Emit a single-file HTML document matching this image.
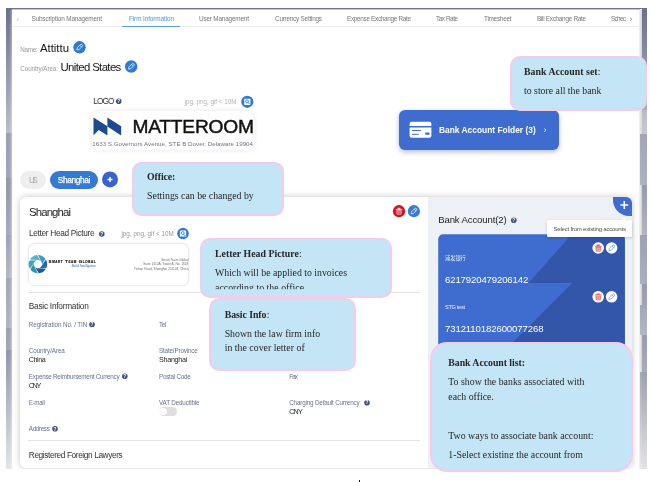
<!DOCTYPE html>
<html lang="en"><head><meta charset="utf-8"><title>Firm Information</title>
<style>
html,body{margin:0;padding:0;background:#fff;}
body{width:650px;height:482px;position:relative;overflow:hidden;font-family:"Liberation Sans", "Noto Sans CJK SC", sans-serif;}
.t{position:absolute;white-space:nowrap;line-height:1;}
.s{font-family:"Liberation Serif", "Noto Serif CJK SC", serif;}
.c{position:absolute;box-sizing:border-box;background:#c3e5f6;border:2px solid #f6cbe9;overflow:hidden;}
svg{position:absolute;overflow:visible;}
#pg{position:absolute;left:0;top:0;width:650px;height:482px;overflow:hidden;filter:blur(0.35px);}
</style></head><body><div id="pg">
<div style="position:absolute;left:6px;top:8px;width:641px;height:1px;background:#6f7592;"></div>
<div style="position:absolute;left:12px;top:9px;width:628px;height:1px;background:#c4c7d3;"></div>
<div style="position:absolute;left:6px;top:8px;width:6px;height:125px;background:linear-gradient(to bottom,#6a708f,#b9bdcb);"></div>
<div style="position:absolute;left:6px;top:133px;width:6px;height:45px;background:linear-gradient(to bottom,#999eb4,#a2a6ba);"></div>
<div style="position:absolute;left:6px;top:178px;width:6px;height:57px;background:linear-gradient(to bottom,#9397af,#a7abbe);"></div>
<div style="position:absolute;left:6px;top:235px;width:6px;height:43px;background:linear-gradient(to bottom,#9ea2b7,#b5b8c7);"></div>
<div style="position:absolute;left:6px;top:278px;width:6px;height:50px;background:linear-gradient(to bottom,#a2a6b9,#b1b5c4);"></div>
<div style="position:absolute;left:6px;top:328px;width:6px;height:22px;background:linear-gradient(to bottom,#9ca0b4,#a4a8ba);"></div>
<div style="position:absolute;left:6px;top:350px;width:6px;height:118.5px;background:linear-gradient(to bottom,#9095aa,#e3e5ea);"></div>
<div style="position:absolute;left:6px;top:9.6px;width:6px;height:459px;background:linear-gradient(to right,rgba(255,255,255,0) 55%,rgba(255,255,255,.35));"></div>
<div style="position:absolute;left:641.6px;top:8px;width:5.4px;height:102px;background:linear-gradient(to bottom,#6a708f,#a9adbd);"></div>
<div style="position:absolute;left:641.6px;top:110px;width:5.4px;height:24px;background:linear-gradient(to bottom,#b9bcc8,#c6c8d1);"></div>
<div style="position:absolute;left:641.6px;top:134px;width:5.4px;height:51px;background:linear-gradient(to bottom,#a1a5b6,#adb0bf);"></div>
<div style="position:absolute;left:641.6px;top:185px;width:5.4px;height:50px;background:linear-gradient(to bottom,#959aae,#b2b5c3);"></div>
<div style="position:absolute;left:641.6px;top:235px;width:5.4px;height:49px;background:linear-gradient(to bottom,#9da1b4,#abaebd);"></div>
<div style="position:absolute;left:641.6px;top:284px;width:5.4px;height:51px;background:linear-gradient(to bottom,#959aad,#b4b7c4);"></div>
<div style="position:absolute;left:641.6px;top:335px;width:5.4px;height:37px;background:linear-gradient(to bottom,#969bae,#a9acbc);"></div>
<div style="position:absolute;left:641.6px;top:372px;width:5.4px;height:96.5px;background:linear-gradient(to bottom,#9da0b0,#e3e3e6);"></div>
<div style="position:absolute;left:639.4px;top:9.6px;width:2.2px;height:459px;background:linear-gradient(to right,#f4f4f6,#d2d3d9);"></div>
<div style="position:absolute;left:639.6px;top:134px;width:2px;height:51px;background:linear-gradient(to bottom,#a3a7b8,#aeb2c1);"></div>
<div style="position:absolute;left:639.6px;top:235px;width:2px;height:49px;background:linear-gradient(to bottom,#a0a4b6,#acafbf);"></div>
<div style="position:absolute;left:639.6px;top:305px;width:2px;height:30px;background:linear-gradient(to bottom,#a2a6b7,#b3b6c4);"></div>
<div style="position:absolute;left:639.6px;top:372px;width:2px;height:96.5px;background:linear-gradient(to bottom,#a6a9b7,#e6e7ea);"></div>
<div style="position:absolute;left:12px;top:26.4px;width:627.4px;height:0.9px;background:#ededf0;"></div>
<div style="position:absolute;left:122px;top:26px;width:58px;height:1.4px;background:#5a9ee0;"></div>
<span class="t" id="t0" style="top:16.23px;font-size:8px;color:#c4c4c4;left:16.50px;">‹</span>
<span class="t" id="t1" style="top:15.78px;font-size:6.4px;color:#787878;letter-spacing:-0.170px;left:31.50px;">Subscription Management</span>
<span class="t" id="t2" style="top:15.78px;font-size:6.4px;color:#4b96e0;letter-spacing:-0.102px;left:129.00px;">Firm Information</span>
<span class="t" id="t3" style="top:15.78px;font-size:6.4px;color:#787878;letter-spacing:-0.184px;left:199.00px;">User Management</span>
<span class="t" id="t4" style="top:15.78px;font-size:6.4px;color:#787878;letter-spacing:-0.237px;left:275.00px;">Currency Settings</span>
<span class="t" id="t5" style="top:15.78px;font-size:6.4px;color:#787878;letter-spacing:-0.318px;left:347.00px;">Expense Exchange Rate</span>
<span class="t" id="t6" style="top:15.78px;font-size:6.4px;color:#787878;letter-spacing:-0.460px;left:436.00px;">Tax Rate</span>
<span class="t" id="t7" style="top:15.78px;font-size:6.4px;color:#787878;letter-spacing:-0.264px;left:484.00px;">Timesheet</span>
<span class="t" id="t8" style="top:15.78px;font-size:6.4px;color:#787878;letter-spacing:-0.294px;left:537.00px;">Bill Exchange Rate</span>
<span class="t" id="t9" style="top:15.78px;font-size:6.4px;color:#787878;letter-spacing:-0.691px;left:611.00px;">Schec</span>
<span class="t" id="t10" style="top:14.26px;font-size:9.5px;color:#8a8a8a;left:629.30px;">›</span>
<span class="t" id="t11" style="top:46.57px;font-size:6.3px;color:#9a9a9a;letter-spacing:-0.312px;left:20.30px;">Name:</span>
<span class="t" id="t12" style="top:42.55px;font-size:11.4px;color:#141414;letter-spacing:-0.021px;left:40.00px;">Attittu</span>
<svg style="left:0;top:0" width="650" height="482" viewBox="0 0 650 482"><g transform="translate(79.5 47.3)"><circle r="6.2" fill="#2f7ad4"/><g transform="scale(1.0)"><g transform="rotate(-45)" fill="none" stroke="#fff" stroke-width="0.75" stroke-linejoin="round" opacity="0.92"><path d="M-2.1 -1.25 H2.4 a1.25 1.25 0 0 1 0 2.5 H-2.1 L-3.7 0 Z"/><path d="M1.7 -1.25 V1.25"/></g></g></g></svg>
<span class="t" id="t13" style="top:66.07px;font-size:6.3px;color:#9a9a9a;letter-spacing:-0.097px;left:20.30px;">Country/Area:</span>
<span class="t" id="t14" style="top:61.75px;font-size:11.4px;color:#141414;letter-spacing:-0.633px;left:60.50px;">United States</span>
<svg style="left:0;top:0" width="650" height="482" viewBox="0 0 650 482"><g transform="translate(131.2 66.5)"><circle r="6.2" fill="#2f7ad4"/><g transform="scale(1.0)"><g transform="rotate(-45)" fill="none" stroke="#fff" stroke-width="0.75" stroke-linejoin="round" opacity="0.92"><path d="M-2.1 -1.25 H2.4 a1.25 1.25 0 0 1 0 2.5 H-2.1 L-3.7 0 Z"/><path d="M1.7 -1.25 V1.25"/></g></g></g></svg>
<span class="t" id="t15" style="top:96.97px;font-size:8.3px;color:#333;letter-spacing:-0.895px;left:93.20px;">LOGO</span>
<svg style="left:0;top:0" width="650" height="482" viewBox="0 0 650 482"><g transform="translate(118.7 101.2)"><circle r="2.8" fill="#42527a"/><text x="0" y="1.74" text-anchor="middle" font-family="Liberation Sans, sans-serif" font-weight="700" font-size="4.76" fill="#fff">?</text></g></svg>
<span class="t" id="t16" style="top:99.27px;font-size:6.3px;color:#b3b3b3;letter-spacing:-0.016px;left:184.70px;">jpg, png, gif &lt; 10M</span>
<svg style="left:0;top:0" width="650" height="482" viewBox="0 0 650 482"><g transform="translate(247.3 101.8)"><circle r="6.1" fill="#2f7ad4"/><rect x="-3.1" y="-3" width="6.2" height="6.1" rx="0.6" fill="#fff"/><circle cx="-0.3" cy="-0.4" r="1.5" fill="none" stroke="#2f7ad4" stroke-width="0.9"/><path d="M0.8 0.8 L2.2 2.2" stroke="#2f7ad4" stroke-width="0.9" stroke-linecap="round"/></g></svg>
<div style="position:absolute;left:91.7px;top:111px;width:162.3px;height:39px;background:#fff;border-radius:7px;box-shadow:0 0 5px rgba(0,0,0,.10);"></div>
<svg style="left:0;top:0" width="650" height="482" viewBox="0 0 650 482"><path d="M93.5 117.4 L107.4 126.3 L107.4 117.4 L121.2 126.3 L121.2 135.5 L107.4 126.6 L107.4 135.5 L98.8 129.9 L93.5 135.3 Z" fill="#1d4b8b"/></svg>
<span class="t" id="t17" style="top:117.05px;font-size:19.2px;color:#111;letter-spacing:-0.212px;left:132.40px;-webkit-text-stroke:0.45px #111;">MATTEROOM</span>
<span class="t" id="t18" style="top:141.25px;font-size:6.2px;color:#6f7683;letter-spacing:0.010px;left:92.30px;">1633 S.Governors Avenue, STE B Dover, Delaware 19904</span>
<div style="position:absolute;left:398.5px;top:110.4px;width:160px;height:39.4px;background:#3e6ccf;border-radius:6px;box-shadow:0 2px 5px rgba(40,60,120,.35);"></div>
<svg style="left:0;top:0" width="650" height="482" viewBox="0 0 650 482"><path d="M411.6 121.8 h17.8 a2 2 0 0 1 2 2 v2.2 h-21.8 v-2.2 a2 2 0 0 1 2 -2 z" fill="#fff"/><path d="M409.6 127.4 h21.8 v8.4 a2 2 0 0 1 -2 2 h-17.8 a2 2 0 0 1 -2 -2 z" fill="#fff"/><rect x="411.9" y="130" width="9" height="1" fill="#3e6ccf"/><rect x="411.9" y="133.8" width="6.9" height="1" fill="#3e6ccf"/><rect x="425.2" y="132.4" width="4.3" height="2.4" rx="0.5" fill="#3e6ccf"/></svg>
<span class="t" id="t19" style="top:125.89px;font-size:8.4px;color:#fff;font-weight:700;letter-spacing:0.010px;left:439.00px;">Bank Account Folder (3)</span>
<span class="t" id="t20" style="top:126.18px;font-size:9px;color:#e8eefc;left:543.50px;">›</span>
<div style="position:absolute;left:20.3px;top:171px;width:25.7px;height:17.8px;background:#eeeeee;border-radius:9px;"></div>
<span class="t" id="t21" style="top:175.97px;font-size:8.3px;color:#a8a8a8;letter-spacing:-2.731px;left:29.00px;">US</span>
<div style="position:absolute;left:49.9px;top:171px;width:48.3px;height:17.8px;background:#3479d2;border-radius:9px;"></div>
<span class="t" id="t22" style="top:175.97px;font-size:8.3px;color:#fff;letter-spacing:-0.354px;left:57.80px;-webkit-text-stroke:0.25px #fff;">Shanghai</span>
<svg style="left:0;top:0" width="650" height="482" viewBox="0 0 650 482"><g transform="translate(110 179.4)"><circle r="8" fill="#3862cf"/><path d="M-2.5 0 H2.5 M0 -2.5 V2.5" stroke="#fff" stroke-width="1.5"/></g></svg>
<div style="position:absolute;left:20.3px;top:197.4px;width:611.7px;height:270.9px;background:#fff;border-radius:6px;box-shadow:0 0 6px rgba(0,0,0,.24);clip-path:inset(-8px -8px -0.7px -8px);"></div>
<div style="position:absolute;left:428.4px;top:197.4px;width:203.6px;height:270.9px;background:#edf0f5;border-radius:0 6px 6px 0;"></div>
<span class="t" id="t23" style="top:206.85px;font-size:11.4px;color:#222;letter-spacing:-0.877px;left:29.00px;">Shanghai</span>
<svg style="left:0;top:0" width="650" height="482" viewBox="0 0 650 482"><g transform="translate(399 211.2)"><circle r="6.1" fill="#d0121b"/><path d="M-3.4 -2.3 H3.4 V-1.2 H-3.4 Z M-1.5 -3.4 H1.5 V-2.3 H-1.5 Z M-2.7 -0.9 H2.7 L2.4 3.4 H-2.4 Z" fill="#f6c9cb"/><path d="M-1.9 0.1 H1.9 M-1.9 1.2 H1.9 M-1.9 2.3 H1.9" stroke="#d0121b" stroke-width="0.55"/></g></svg>
<svg style="left:0;top:0" width="650" height="482" viewBox="0 0 650 482"><g transform="translate(413.9 211.2)"><circle r="6.1" fill="#3a7bd5"/><g transform="scale(1.0)"><g transform="rotate(-45)" fill="none" stroke="#fff" stroke-width="0.75" stroke-linejoin="round" opacity="0.92"><path d="M-2.1 -1.25 H2.4 a1.25 1.25 0 0 1 0 2.5 H-2.1 L-3.7 0 Z"/><path d="M1.7 -1.25 V1.25"/></g></g></g></svg>
<span class="t" id="t24" style="top:229.27px;font-size:8.3px;color:#333;letter-spacing:-0.327px;left:29.00px;">Letter Head Picture</span>
<svg style="left:0;top:0" width="650" height="482" viewBox="0 0 650 482"><g transform="translate(101.8 234)"><circle r="2.8" fill="#42527a"/><text x="0" y="1.74" text-anchor="middle" font-family="Liberation Sans, sans-serif" font-weight="700" font-size="4.76" fill="#fff">?</text></g></svg>
<span class="t" id="t25" style="top:231.37px;font-size:6.3px;color:#9a9a9a;letter-spacing:0.018px;left:121.40px;">jpg, png, gif &lt; 10M</span>
<svg style="left:0;top:0" width="650" height="482" viewBox="0 0 650 482"><g transform="translate(183 233.5)"><circle r="5.8" fill="#2f7ad4"/><rect x="-3.1" y="-3" width="6.2" height="6.1" rx="0.6" fill="#fff"/><circle cx="-0.3" cy="-0.4" r="1.5" fill="none" stroke="#2f7ad4" stroke-width="0.9"/><path d="M0.8 0.8 L2.2 2.2" stroke="#2f7ad4" stroke-width="0.9" stroke-linecap="round"/></g></svg>
<div style="position:absolute;left:27.8px;top:243.3px;width:161.7px;height:42.4px;background:#fff;border-radius:7px;border:0.8px solid #ececec;box-sizing:border-box;box-shadow:0 0 3px rgba(0,0,0,.08);"></div>
<svg style="left:0;top:0" width="650" height="482" viewBox="0 0 650 482"><g transform="translate(37.9 264.2)"><path d="M-7.97 -4.60 A9.2 9.2 0 0 1 -0.96 -9.15 L2.81 -3.12 A4.2 4.2 0 0 0 -0.58 -4.16 Z" fill="#56b3d2"/><path d="M0.00 -9.20 A9.2 9.2 0 0 1 7.44 -5.41 L4.11 0.87 A4.2 4.2 0 0 0 3.31 -2.59 Z" fill="#3d9cc4"/><path d="M7.97 -4.60 A9.2 9.2 0 0 1 8.40 3.74 L1.30 3.99 A4.2 4.2 0 0 0 3.89 1.57 Z" fill="#1f6aa8"/><path d="M7.97 4.60 A9.2 9.2 0 0 1 0.96 9.15 L-2.81 3.12 A4.2 4.2 0 0 0 0.58 4.16 Z" fill="#1b5a9a"/><path d="M0.00 9.20 A9.2 9.2 0 0 1 -7.44 5.41 L-4.11 -0.87 A4.2 4.2 0 0 0 -3.31 2.59 Z" fill="#2a98b4"/><path d="M-7.97 4.60 A9.2 9.2 0 0 1 -8.40 -3.74 L-1.30 -3.99 A4.2 4.2 0 0 0 -3.89 -1.57 Z" fill="#36a8c0"/></g></svg>
<span class="t" id="t26" style="top:260.18px;font-size:4.4px;color:#111;font-weight:700;letter-spacing:0.616px;left:48.60px;font-variant:small-caps;-webkit-text-stroke:0.15px #111;">Smart Team Global</span>
<span class="t s" id="t27" style="top:264.59px;font-size:3.6px;color:#2a66b0;font-style:italic;letter-spacing:-0.086px;left:71.40px;">Build Intelligence</span>
<span class="t" id="t28" style="top:258.79px;font-size:3.2px;color:#707070;right:461.60px;">Smart Team Global</span>
<span class="t" id="t29" style="top:262.99px;font-size:3.2px;color:#707070;right:461.60px;">Suite 1010A, Tower A, No. 1618</span>
<span class="t" id="t30" style="top:268.39px;font-size:3.2px;color:#707070;right:461.60px;">Yishan Road, Shanghai 201103, China</span>
<div style="position:absolute;left:28.3px;top:292.1px;width:391.3px;height:0.9px;background:#e4e4e6;"></div>
<span class="t" id="t31" style="top:301.77px;font-size:8.3px;color:#333;letter-spacing:-0.257px;left:28.80px;">Basic Information</span>
<span class="t" id="t32" style="top:321.57px;font-size:6.3px;color:#66728f;letter-spacing:-0.092px;left:28.80px;">Registration No. / TIN</span>
<svg style="left:0;top:0" width="650" height="482" viewBox="0 0 650 482"><g transform="translate(92 324.5)"><circle r="2.8" fill="#42527a"/><text x="0" y="1.74" text-anchor="middle" font-family="Liberation Sans, sans-serif" font-weight="700" font-size="4.76" fill="#fff">?</text></g></svg>
<span class="t" id="t33" style="top:321.57px;font-size:6.3px;color:#66728f;letter-spacing:-0.281px;left:159.00px;">Tel</span>
<span class="t" id="t34" style="top:348.37px;font-size:6.3px;color:#66728f;letter-spacing:-0.101px;left:28.80px;">Country/Area</span>
<span class="t" id="t35" style="top:355.71px;font-size:7.2px;color:#262626;letter-spacing:-0.445px;left:28.80px;">China</span>
<span class="t" id="t36" style="top:348.37px;font-size:6.3px;color:#66728f;letter-spacing:-0.166px;left:159.00px;">State/Province</span>
<span class="t" id="t37" style="top:355.71px;font-size:7.2px;color:#262626;letter-spacing:-0.296px;left:159.00px;">Shanghai</span>
<span class="t" id="t38" style="top:374.37px;font-size:6.3px;color:#66728f;letter-spacing:-0.248px;left:28.80px;">Expense Reimbursement Currency</span>
<svg style="left:0;top:0" width="650" height="482" viewBox="0 0 650 482"><g transform="translate(124.8 376.3)"><circle r="2.8" fill="#42527a"/><text x="0" y="1.74" text-anchor="middle" font-family="Liberation Sans, sans-serif" font-weight="700" font-size="4.76" fill="#fff">?</text></g></svg>
<span class="t" id="t39" style="top:381.71px;font-size:7.2px;color:#262626;letter-spacing:-1.394px;left:28.80px;">CNY</span>
<span class="t" id="t40" style="top:374.37px;font-size:6.3px;color:#66728f;letter-spacing:-0.261px;left:159.00px;">Postal Code</span>
<span class="t" id="t41" style="top:373.67px;font-size:6.3px;color:#66728f;letter-spacing:-0.850px;left:289.20px;">Fax</span>
<span class="t" id="t42" style="top:399.57px;font-size:6.3px;color:#66728f;letter-spacing:-0.369px;left:28.80px;">E-mail</span>
<span class="t" id="t43" style="top:399.57px;font-size:6.3px;color:#66728f;letter-spacing:-0.162px;left:159.00px;">VAT Deductible</span>
<div style="position:absolute;left:158.6px;top:407px;width:18px;height:9px;background:#dedede;border-radius:4.5px;"></div>
<div style="position:absolute;left:159.4px;top:407.8px;width:7.4px;height:7.4px;background:#fff;border-radius:50%;"></div>
<span class="t" id="t44" style="top:399.67px;font-size:6.3px;color:#66728f;letter-spacing:-0.173px;left:289.20px;">Charging Default Currency</span>
<svg style="left:0;top:0" width="650" height="482" viewBox="0 0 650 482"><g transform="translate(367 402.7)"><circle r="2.8" fill="#42527a"/><text x="0" y="1.74" text-anchor="middle" font-family="Liberation Sans, sans-serif" font-weight="700" font-size="4.76" fill="#fff">?</text></g></svg>
<span class="t" id="t45" style="top:407.71px;font-size:7.2px;color:#262626;letter-spacing:-0.844px;left:289.20px;">CNY</span>
<span class="t" id="t46" style="top:425.67px;font-size:6.3px;color:#66728f;letter-spacing:-0.352px;left:28.80px;">Address</span>
<svg style="left:0;top:0" width="650" height="482" viewBox="0 0 650 482"><g transform="translate(55 428.8)"><circle r="2.8" fill="#42527a"/><text x="0" y="1.74" text-anchor="middle" font-family="Liberation Sans, sans-serif" font-weight="700" font-size="4.76" fill="#fff">?</text></g></svg>
<div style="position:absolute;left:28.3px;top:440.3px;width:391.3px;height:0.9px;background:#e4e4e6;"></div>
<span class="t" id="t47" style="top:450.57px;font-size:8.3px;color:#333;letter-spacing:-0.395px;left:28.80px;">Registered Foreign Lawyers</span>
<span class="t" id="t48" style="top:214.67px;font-size:9.6px;color:#222;letter-spacing:-0.136px;left:438.20px;">Bank Account(2)</span>
<svg style="left:0;top:0" width="650" height="482" viewBox="0 0 650 482"><g transform="translate(513.8 220.2)"><circle r="2.8" fill="#42527a"/><text x="0" y="1.74" text-anchor="middle" font-family="Liberation Sans, sans-serif" font-weight="700" font-size="4.76" fill="#fff">?</text></g></svg>
<div style="position:absolute;left:613px;top:197px;width:19px;height:19px;background:#3e6ccf;border-radius:0 6px 0 16px;"></div>
<svg style="left:0;top:0" width="650" height="482" viewBox="0 0 650 482"><g transform="translate(624.3 205)"><path d="M-3.9 0 H3.9 M0 -3.9 V3.9" stroke="#fff" stroke-width="1.6"/></g></svg>
<svg style="left:0;top:0" width="650" height="482" viewBox="0 0 650 482"><defs><clipPath id="bc"><path d="M438.2 239.3 a5 5 0 0 1 5 -5 h176.6 a5 5 0 0 1 5 5 V366 H438.2 Z"/></clipPath></defs><g clip-path="url(#bc)"><rect x="438" y="234" width="188" height="132" fill="#3e6ccf"/><path d="M571.8 234.3 H626 V283 H528.5 Z" fill="#3356ab"/><path d="M572.3 283 H626 V366 H489.3 Z" fill="#3356ab"/></g></svg>
<span class="t" id="t49" style="top:255.50px;font-size:5.2px;color:#e8eefc;letter-spacing:0.011px;left:445.00px;">浦发银行</span>
<svg style="left:0;top:0" width="650" height="482" viewBox="0 0 650 482"><g transform="translate(598.2 248)"><circle r="5.8" fill="#fff"/><path d="M-3.4 -2.3 H3.4 V-1.2 H-3.4 Z M-1.5 -3.4 H1.5 V-2.3 H-1.5 Z M-2.7 -0.9 H2.7 L2.4 3.4 H-2.4 Z" fill="#e25a62"/><path d="M-1.9 0.1 H1.9 M-1.9 1.2 H1.9 M-1.9 2.3 H1.9" stroke="#fff" stroke-width="0.55"/></g></svg>
<svg style="left:0;top:0" width="650" height="482" viewBox="0 0 650 482"><g transform="translate(611.6 248)"><circle r="5.8" fill="#fff"/><g transform="scale(1.0)"><g transform="rotate(-45)" fill="none" stroke="#5b9be0" stroke-width="0.75" stroke-linejoin="round" opacity="0.92"><path d="M-2.1 -1.25 H2.4 a1.25 1.25 0 0 1 0 2.5 H-2.1 L-3.7 0 Z"/><path d="M1.7 -1.25 V1.25"/></g></g></g></svg>
<span class="t" id="t50" style="top:274.97px;font-size:9.6px;color:#fff;letter-spacing:-0.138px;left:445.00px;">6217920479206142</span>
<span class="t" id="t51" style="top:304.96px;font-size:5.6px;color:#e8eefc;letter-spacing:-0.297px;left:445.00px;">STG test</span>
<svg style="left:0;top:0" width="650" height="482" viewBox="0 0 650 482"><g transform="translate(598.2 296.8)"><circle r="5.8" fill="#fff"/><path d="M-3.4 -2.3 H3.4 V-1.2 H-3.4 Z M-1.5 -3.4 H1.5 V-2.3 H-1.5 Z M-2.7 -0.9 H2.7 L2.4 3.4 H-2.4 Z" fill="#e25a62"/><path d="M-1.9 0.1 H1.9 M-1.9 1.2 H1.9 M-1.9 2.3 H1.9" stroke="#fff" stroke-width="0.55"/></g></svg>
<svg style="left:0;top:0" width="650" height="482" viewBox="0 0 650 482"><g transform="translate(611.6 296.8)"><circle r="5.8" fill="#fff"/><g transform="scale(1.0)"><g transform="rotate(-45)" fill="none" stroke="#5b9be0" stroke-width="0.75" stroke-linejoin="round" opacity="0.92"><path d="M-2.1 -1.25 H2.4 a1.25 1.25 0 0 1 0 2.5 H-2.1 L-3.7 0 Z"/><path d="M1.7 -1.25 V1.25"/></g></g></g></svg>
<span class="t" id="t52" style="top:324.07px;font-size:9.6px;color:#fff;letter-spacing:-0.121px;left:445.00px;">7312110182600077268</span>
<svg style="left:0;top:0" width="650" height="482" viewBox="0 0 650 482"><path d="M621.4 220.4 L624.1 217.4 L626.8 220.4 Z" fill="#fff"/></svg>
<div style="position:absolute;left:547.2px;top:220px;width:84.8px;height:17.4px;background:#fff;border-radius:1.5px;box-shadow:0 1px 3px rgba(0,0,0,.18);"></div>
<span class="t" id="t53" style="top:225.74px;font-size:6.1px;color:#4d4d4d;letter-spacing:-0.242px;left:553.50px;">Select from existing accounts</span>
<div class="c" style="left:509.8px;top:55.9px;width:137.49999999999994px;height:54.70000000000001px;border-radius:10px;"></div>
<span class="t s" id="t54" style="top:66.89px;font-size:9.8px;color:#262626;font-weight:700;letter-spacing:0.043px;left:524.00px;">Bank Account set</span>
<span class="t s" id="t55" style="top:66.89px;font-size:9.8px;color:#262626;left:597.80px;">:</span>
<span class="t s" id="t56" style="top:86.49px;font-size:9.8px;color:#262626;letter-spacing:0.002px;left:524.00px;">to store all the bank</span>
<div class="c" style="left:132.1px;top:162.1px;width:151.69999999999996px;height:54.30000000000001px;border-radius:9.5px;"></div>
<span class="t s" id="t57" style="top:171.79px;font-size:9.8px;color:#262626;font-weight:700;letter-spacing:-0.105px;left:147.10px;">Office:</span>
<span class="t s" id="t58" style="top:190.59px;font-size:9.8px;color:#262626;letter-spacing:-0.002px;left:147.10px;">Settings can be changed by</span>
<div class="c" style="left:200.4px;top:238.1px;width:191.99999999999997px;height:60.29999999999998px;border-radius:10px;"></div>
<span class="t s" id="t59" style="top:249.09px;font-size:9.8px;color:#262626;font-weight:700;letter-spacing:0.020px;left:215.00px;">Letter Head Picture</span>
<span class="t s" id="t60" style="top:249.09px;font-size:9.8px;color:#262626;left:299.00px;">:</span>
<span class="t s" id="t61" style="top:268.29px;font-size:9.8px;color:#262626;letter-spacing:0.001px;left:215.00px;">Which will be applied to invoices</span>
<span class="t s" id="t62" style="top:282.79px;font-size:9.8px;color:#262626;letter-spacing:0.035px;left:215.00px;clip-path:inset(0 0 3.4px 0);">according to the office</span>
<div class="c" style="left:208.79999999999998px;top:298.40000000000003px;width:146.99999999999997px;height:72.79999999999995px;border-radius:10.5px;"></div>
<span class="t s" id="t63" style="top:309.79px;font-size:9.8px;color:#262626;font-weight:700;letter-spacing:-0.043px;left:224.70px;">Basic Info</span>
<span class="t s" id="t64" style="top:309.79px;font-size:9.8px;color:#262626;left:266.70px;">:</span>
<span class="t s" id="t65" style="top:328.79px;font-size:9.8px;color:#262626;letter-spacing:-0.017px;left:224.70px;">Shown the law firm info</span>
<span class="t s" id="t66" style="top:343.29px;font-size:9.8px;color:#262626;letter-spacing:0.027px;left:224.70px;">in the cover letter of</span>
<div class="c" style="left:430.20000000000005px;top:342.40000000000003px;width:202.9999999999999px;height:129.19999999999993px;border-radius:17px;"></div>
<span class="t s" id="t67" style="top:357.59px;font-size:9.8px;color:#262626;font-weight:700;letter-spacing:-0.036px;left:448.30px;">Bank Account list:</span>
<span class="t s" id="t68" style="top:376.69px;font-size:9.8px;color:#262626;letter-spacing:0.017px;left:448.30px;">To show the banks associated with</span>
<span class="t s" id="t69" style="top:391.89px;font-size:9.8px;color:#262626;letter-spacing:-0.001px;left:448.30px;">each office.</span>
<span class="t s" id="t70" style="top:430.79px;font-size:9.8px;color:#262626;letter-spacing:0.007px;left:448.30px;">Two ways to associate bank account:</span>
<span class="t s" id="t71" style="top:449.99px;font-size:9.8px;color:#262626;letter-spacing:0.003px;left:448.30px;clip-path:inset(0 0 1.9px 0);">1-Select existing the account from</span>
<div style="position:absolute;left:359px;top:480px;width:1px;height:2px;background:#111;"></div>
</div></body></html>
